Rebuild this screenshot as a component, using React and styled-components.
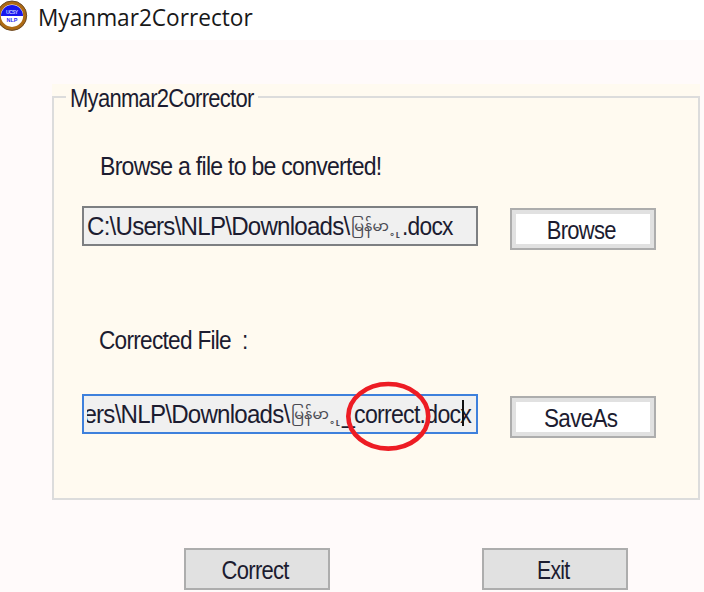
import React from "react";
import styled, { createGlobalStyle } from "styled-components";

const GlobalStyle = createGlobalStyle`
  * { box-sizing: border-box; }
  body { margin: 0; background: #fffafa; overflow: hidden; }
`;

const Window = styled.div`
  width: 704px;
  height: 592px;
  overflow: hidden;
  background: #fffafa;
  color: #1c1c30;
  font-family: "Liberation Sans", sans-serif;
  font-size: 25px;
  line-height: 28px;
`;

const TitleBar = styled.header`
  display: flex;
  align-items: flex-start;
  height: 40px;
  background: #fff;
`;

const AppIcon = styled.svg`
  flex: none;
  width: 28px;
  height: 32px;
`;

const Title = styled.h1`
  margin: 0 0 0 10px;
  font: 400 24px/34px "Open Sans", sans-serif;
  color: #181818;
  white-space: nowrap;
  transform: scaleX(0.943);
  transform-origin: left;
`;

const Fit = styled.span`
  display: inline-block;
  white-space: pre;
  letter-spacing: -0.8px;
  transform: scaleX(${(p) => p.$fit});
  transform-origin: ${(p) => p.$from || "left"};
`;

const Panel = styled.div`
  width: 648px;
  margin: 44px 0 0 52px;
  background: #fffaf0;
`;

const Group = styled.fieldset`
  height: 416px;
  margin: 0;
  padding: 0 0 0 28px;
  border: 2px solid #dcdcdc;
`;

const Legend = styled.legend`
  width: 192px;
  height: 26px;
  margin-left: -16px;
  padding: 0 0 0 4px;
`;

const Caption = styled.div`
  height: 28px;
  margin: ${(p) => p.$top}px 0 0 ${(p) => p.$indent}px;
`;

const Row = styled.div`
  display: flex;
  align-items: flex-start;
  gap: 32px;
  margin-top: ${(p) => p.$top}px;
`;

const Field = styled.div`
  position: relative;
  width: 396px;
  height: 40px;
  padding: 4px 2px 0 3px;
  border: 2px solid ${(p) => (p.$active ? "#3e80dc" : "#7d7f82")};
  background: #f0f0f0;
`;

const Path = styled.div`
  display: flex;
  height: 32px;
  overflow: ${(p) => (p.$scrolled ? "hidden" : "visible")};
  white-space: pre;
`;

const Part = styled.span`
  flex: none;
  width: ${(p) => p.$w}px;
  margin-left: ${(p) => p.$shift || 0}px;
`;

const Myanmar = styled.span`
  flex: none;
  width: ${(p) => p.$w}px;
  color: #4a4a52;
  font: 14.5px/31px "Myanmar Text", "Noto Sans Myanmar", sans-serif;
`;

const Caret = styled.i`
  position: absolute;
  left: 378px;
  top: 4px;
  width: 2px;
  height: 26px;
  background: #111;
`;

const Ring = styled.svg`
  position: absolute;
  left: 260px;
  top: -17px;
  width: 88px;
  height: 74px;
  overflow: visible;
`;

const Button = styled.button`
  flex: none;
  width: 146px;
  height: 42px;
  margin-top: ${(p) => p.$top || 0}px;
  padding: 2px 4px 0 0;
  border: 2px solid #adadad;
  background: ${(p) => (p.$light ? "#fff" : "#e1e1e1")};
  box-shadow: inset 0 0 0 4px #e1e1e1;
  color: inherit;
  font: inherit;
  text-align: center;
`;

const Actions = styled.footer`
  display: flex;
  gap: 152px;
  margin: 48px 0 0 184px;
`;

export default function App() {
  return (
    <Window>
      <GlobalStyle />
      <TitleBar>
        <AppIcon viewBox="0 0 28 32">
          <circle cx="12" cy="15.7" r="13" fill="#fff" stroke="#ad6a14" strokeWidth="3.6" />
          <circle cx="12" cy="15.7" r="14.7" fill="none" stroke="#6b4a28" strokeWidth="1" />
          <path d="M1 16a11 11 0 0 1 22 0Z" fill="#1717ee" />
          <text x="6" y="13.5" fontSize="5" fontWeight="700" fontFamily="Liberation Sans" fill="#bfc5ff" textLength="12">UCSY</text>
          <text x="6.5" y="21.5" fontSize="5.5" fontWeight="700" fontFamily="Liberation Sans" fill="#2929ef">NLP</text>
        </AppIcon>
        <Title>Myanmar2Corrector</Title>
      </TitleBar>
      <Panel>
        <Group>
          <Legend><Fit $fit={0.88}>Myanmar2Corrector</Fit></Legend>
          <Caption $top={42} $indent={18}><Fit $fit={0.922}>Browse a file to be converted!</Fit></Caption>
          <Row $top={26}>
            <Field>
              <Path>
                <Part $w={264}><Fit $fit={0.965}>C:\Users\NLP\Downloads\</Fit></Part>
                <Myanmar $w={42}>မြန်မာ</Myanmar>
                <Myanmar $w={5}>{"\u00a0\u1037"}</Myanmar>
                <Myanmar $w={4}>{"\u00a0\u102f"}</Myanmar>
                <Part $w={60}><Fit $fit={0.91}>.docx</Fit></Part>
              </Path>
            </Field>
            <Button $light $top={2}><Fit $from="center" $fit={0.88}>Browse</Fit></Button>
          </Row>
          <Caption $top={76} $indent={17}><Fit $fit={0.905}>Corrected File  :</Fit></Caption>
          <Row $top={40}>
            <Field $active>
              <Path $scrolled>
                <Part $w={264} $shift={-60}><Fit $fit={0.965}>C:\Users\NLP\Downloads\</Fit></Part>
                <Myanmar $w={42}>မြန်မာ</Myanmar>
                <Myanmar $w={5}>{"\u00a0\u1037"}</Myanmar>
                <Myanmar $w={4}>{"\u00a0\u102f"}</Myanmar>
                <Part $w={130}><Fit $fit={0.925}>_correct.docx</Fit></Part>
              </Path>
              <Caret />
              <Ring viewBox="0 0 88 74">
                <ellipse cx="44.3" cy="37.3" rx="40" ry="32.3" fill="none" stroke="#ed1c24" strokeWidth="4.6" />
              </Ring>
            </Field>
            <Button $light $top={2}><Fit $from="center" $fit={0.9}>SaveAs</Fit></Button>
          </Row>
        </Group>
      </Panel>
      <Actions>
        <Button><Fit $from="center" $fit={0.88}>Correct</Fit></Button>
        <Button><Fit $from="center" $fit={0.85}>Exit</Fit></Button>
      </Actions>
    </Window>
  );
}
